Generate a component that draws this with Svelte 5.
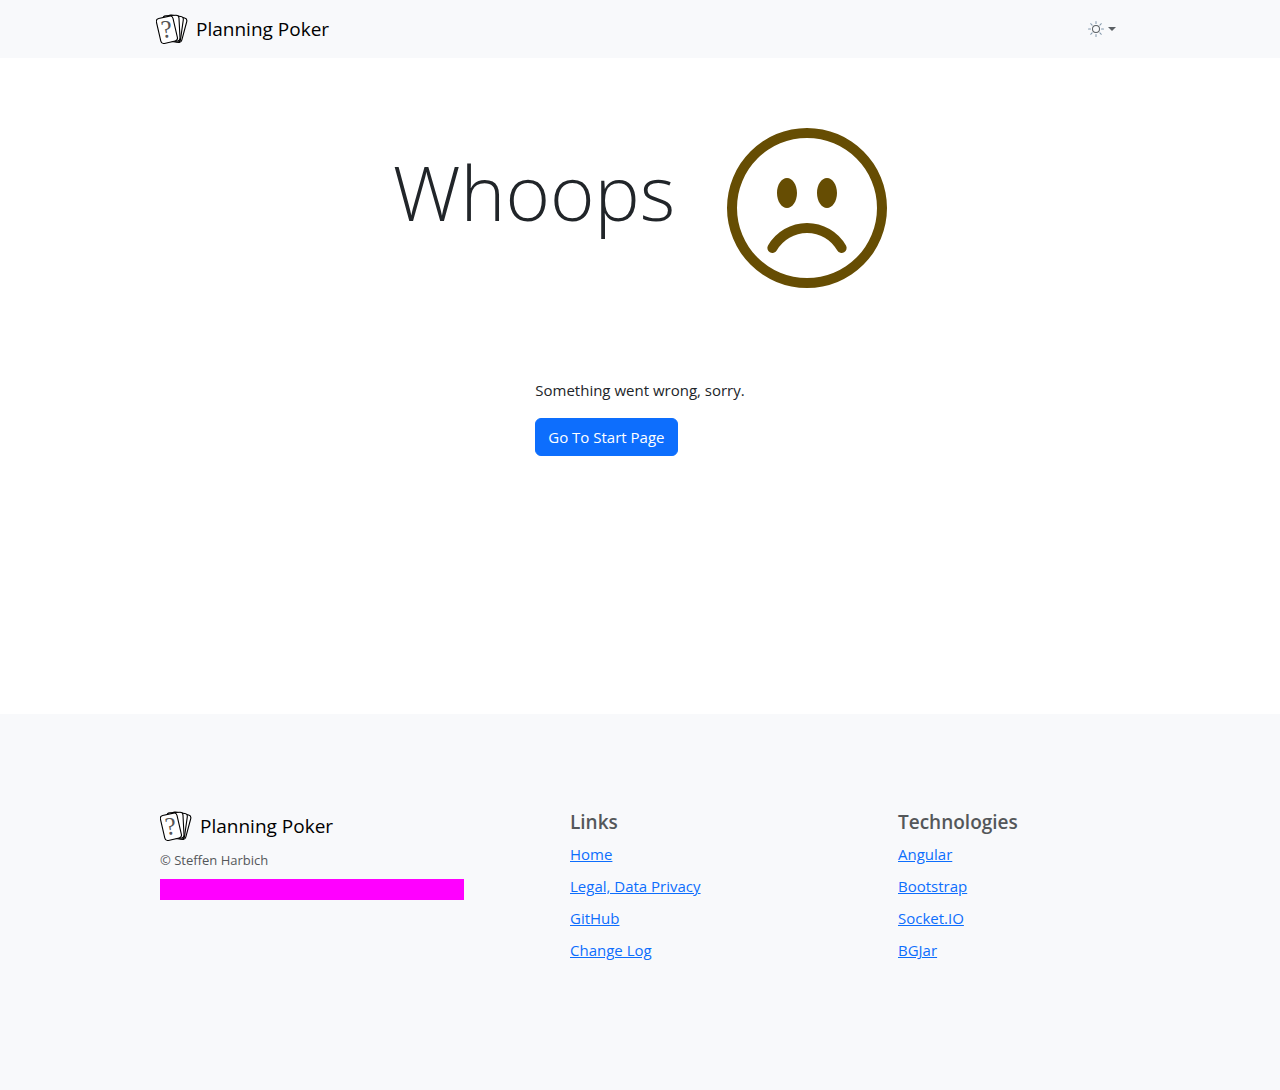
<script>
  const links = ['Home', 'Legal, Data Privacy', 'GitHub', 'Change Log'];
  const technologies = ['Angular', 'Bootstrap', 'Socket.IO', 'BGJar'];
</script>

{#snippet brand()}
  <a class="brand" href="#home">
    <svg class="logo" viewBox="0 0 32 32" aria-hidden="true">
      <g fill="#fff" stroke="#000" stroke-width="1.1">
        <rect x="13.5" y="3.5" width="15" height="25" rx="3" transform="rotate(15 21 16)" />
        <rect x="10.5" y="2.7" width="15.5" height="26" rx="3" transform="rotate(8 18.500 15.500)" />
        <rect x="7.500" y="2.500" width="16" height="26" rx="3" transform="rotate(-3 15.500 15.500)" />
        <rect x="2.400" y="4" width="17" height="25.500" rx="3" transform="rotate(-13 11 16.700)" />
      </g>
      <text class="mark" x="5" y="24.500" transform="rotate(-7 10.500 16)">?</text>
    </svg>
    <span>Planning Poker</span>
  </a>
{/snippet}

{#snippet linkList(title, items)}
  <h2>{title}</h2>
  <ul>
    {#each items as item}
      <li><a href="#{item.toLowerCase()}">{item}</a></li>
    {/each}
  </ul>
{/snippet}

<div class="page">
  <header>
    <nav class="container bar">
      {@render brand()}
      <button class="theme" type="button" aria-label="Toggle theme">
        <svg class="sun" viewBox="0 0 16 16" fill="currentColor" aria-hidden="true">
          <path d="M8 11a3 3 0 1 1 0-6 3 3 0 0 1 0 6m0 1a4 4 0 1 0 0-8 4 4 0 0 0 0 8" />
          <path class="rays" d="M8 0a.5.5 0 0 1 .5.5v2a.5.5 0 0 1-1 0v-2A.5.5 0 0 1 8 0m0 13a.5.5 0 0 1 .5.5v2a.5.5 0 0 1-1 0v-2A.5.5 0 0 1 8 13m8-5a.5.5 0 0 1-.5.5h-2a.5.5 0 0 1 0-1h2a.5.5 0 0 1 .5.5M3 8a.5.5 0 0 1-.5.5h-2a.5.5 0 0 1 0-1h2A.5.5 0 0 1 3 8m10.657-5.657a.5.5 0 0 1 0 .707l-1.414 1.415a.5.5 0 1 1-.707-.708l1.414-1.414a.5.5 0 0 1 .707 0m-9.193 9.193a.5.5 0 0 1 0 .707L3.05 13.657a.5.5 0 0 1-.707-.707l1.414-1.414a.5.5 0 0 1 .707 0m9.193 2.121a.5.5 0 0 1-.707 0l-1.414-1.414a.5.5 0 0 1 .707-.707l1.414 1.414a.5.5 0 0 1 0 .707M4.464 4.465a.5.5 0 0 1-.707 0L2.343 3.05a.5.5 0 1 1 .707-.707l1.414 1.414a.5.5 0 0 1 0 .708" />
        </svg>
        <span class="caret"></span>
      </button>
    </nav>
  </header>

  <main>
    <div class="hero">
      <h1>Whoops</h1>
      <svg class="frown" viewBox="0 0 16 16" fill="currentColor" aria-hidden="true">
        <path d="M8 15A7 7 0 1 1 8 1a7 7 0 0 1 0 14m0 1A8 8 0 1 0 8 0a8 8 0 0 0 0 16" />
        <path d="M4.285 12.433a.5.5 0 0 0 .683-.183A3.5 3.5 0 0 1 8 10.5c1.295 0 2.426.703 3.032 1.75a.5.5 0 0 0 .866-.5A4.5 4.5 0 0 0 8 9.5a4.5 4.5 0 0 0-3.898 2.25.5.5 0 0 0 .183.683M7 6.5C7 7.328 6.552 8 6 8s-1-.672-1-1.5S5.448 5 6 5s1 .672 1 1.5m4 0c0 .828-.448 1.5-1 1.5s-1-.672-1-1.5S9.448 5 10 5s1 .672 1 1.5" />
      </svg>
    </div>
    <div class="message">
      <p>Something went wrong, sorry.</p>
      <button class="start" type="button">Go To Start Page</button>
    </div>
  </main>

  <footer>
    <div class="container columns">
      <section class="about">
        {@render brand()}
        <small>© Steffen Harbich</small>
        <div class="banner"></div>
      </section>
      <section class="links">{@render linkList('Links', links)}</section>
      <section class="tech">{@render linkList('Technologies', technologies)}</section>
    </div>
  </footer>
</div>

<style>
  :global(body) {
    margin: 0;
    background: #fff;
    color: #212529;
    font: 400 16px/24px 'Segoe UI', 'Open Sans', 'Noto Sans', sans-serif;
  }
  .page {
    min-height: 100vh;
    display: flex;
    flex-direction: column;
  }
  .container {
    max-width: 960px;
    margin: 0 auto;
  }
  header {
    padding: 8px 16px 8px 8px;
    background: #f8f9fb;
  }
  .bar {
    display: flex;
    align-items: center;
    justify-content: space-between;
    min-height: 42px;
  }
  .brand {
    display: flex;
    align-items: center;
    gap: 8px;
    color: #000;
    font-size: 19px;
    line-height: 32px;
    text-decoration: none;
  }
  .logo {
    width: 32px;
    height: 32px;
  }
  .mark {
    font: 25px 'Liberation Serif', serif;
    fill: #555;
  }
  .theme {
    display: flex;
    align-items: center;
    gap: 4px;
    padding: 0;
    border: 0;
    background: none;
    color: #5b6064;
    cursor: pointer;
  }
  .sun {
    width: 16px;
    height: 16px;
  }
  .rays {
    fill: #8197ab;
  }
  .caret {
    border: 4px solid transparent;
    border-top-color: currentColor;
    border-bottom: 0;
  }
  main {
    display: flex;
    flex-direction: column;
    align-items: center;
    padding: 70px 16px 258px;
  }
  .hero {
    display: flex;
    align-items: center;
    justify-content: center;
    flex-wrap: wrap;
    gap: 52px;
  }
  h1 {
    margin: 0;
    padding-bottom: 32px;
    font-size: 76px;
    font-weight: 300;
    line-height: 96px;
  }
  .frown {
    width: 160px;
    height: 160px;
    color: #664d03;
  }
  .message {
    padding-top: 90px;
  }
  p {
    margin: 0 0 16px;
    font-size: 15px;
  }
  .start {
    padding: 6px 12px;
    border: 1px solid #0d6efd;
    border-radius: 6px;
    background: #0d6efd;
    color: #fff;
    font: inherit;
    font-size: 15px;
    cursor: pointer;
  }
  footer {
    flex: 1;
    padding: 96px 16px;
    background: #f8f9fb;
    color: #54575a;
  }
  .columns {
    display: grid;
    grid-template-columns: repeat(12, 1fr);
    column-gap: 24px;
  }
  .about {
    grid-column: 1 / span 4;
  }
  .links {
    grid-column: 6 / span 4;
  }
  .tech {
    grid-column: 10 / span 3;
  }
  small {
    display: block;
    margin: 8px 0;
    font-size: 13px;
    line-height: 21px;
  }
  .banner {
    height: 21px;
    background: #f0f;
  }
  h2 {
    margin: 0 0 8px;
    font-size: 19px;
    font-weight: 600;
    line-height: 24px;
  }
  ul {
    display: grid;
    gap: 8px;
    margin: 0;
    padding: 0;
    list-style: none;
    font-size: 15px;
  }
  li a {
    color: #0d6efd;
  }
</style>
